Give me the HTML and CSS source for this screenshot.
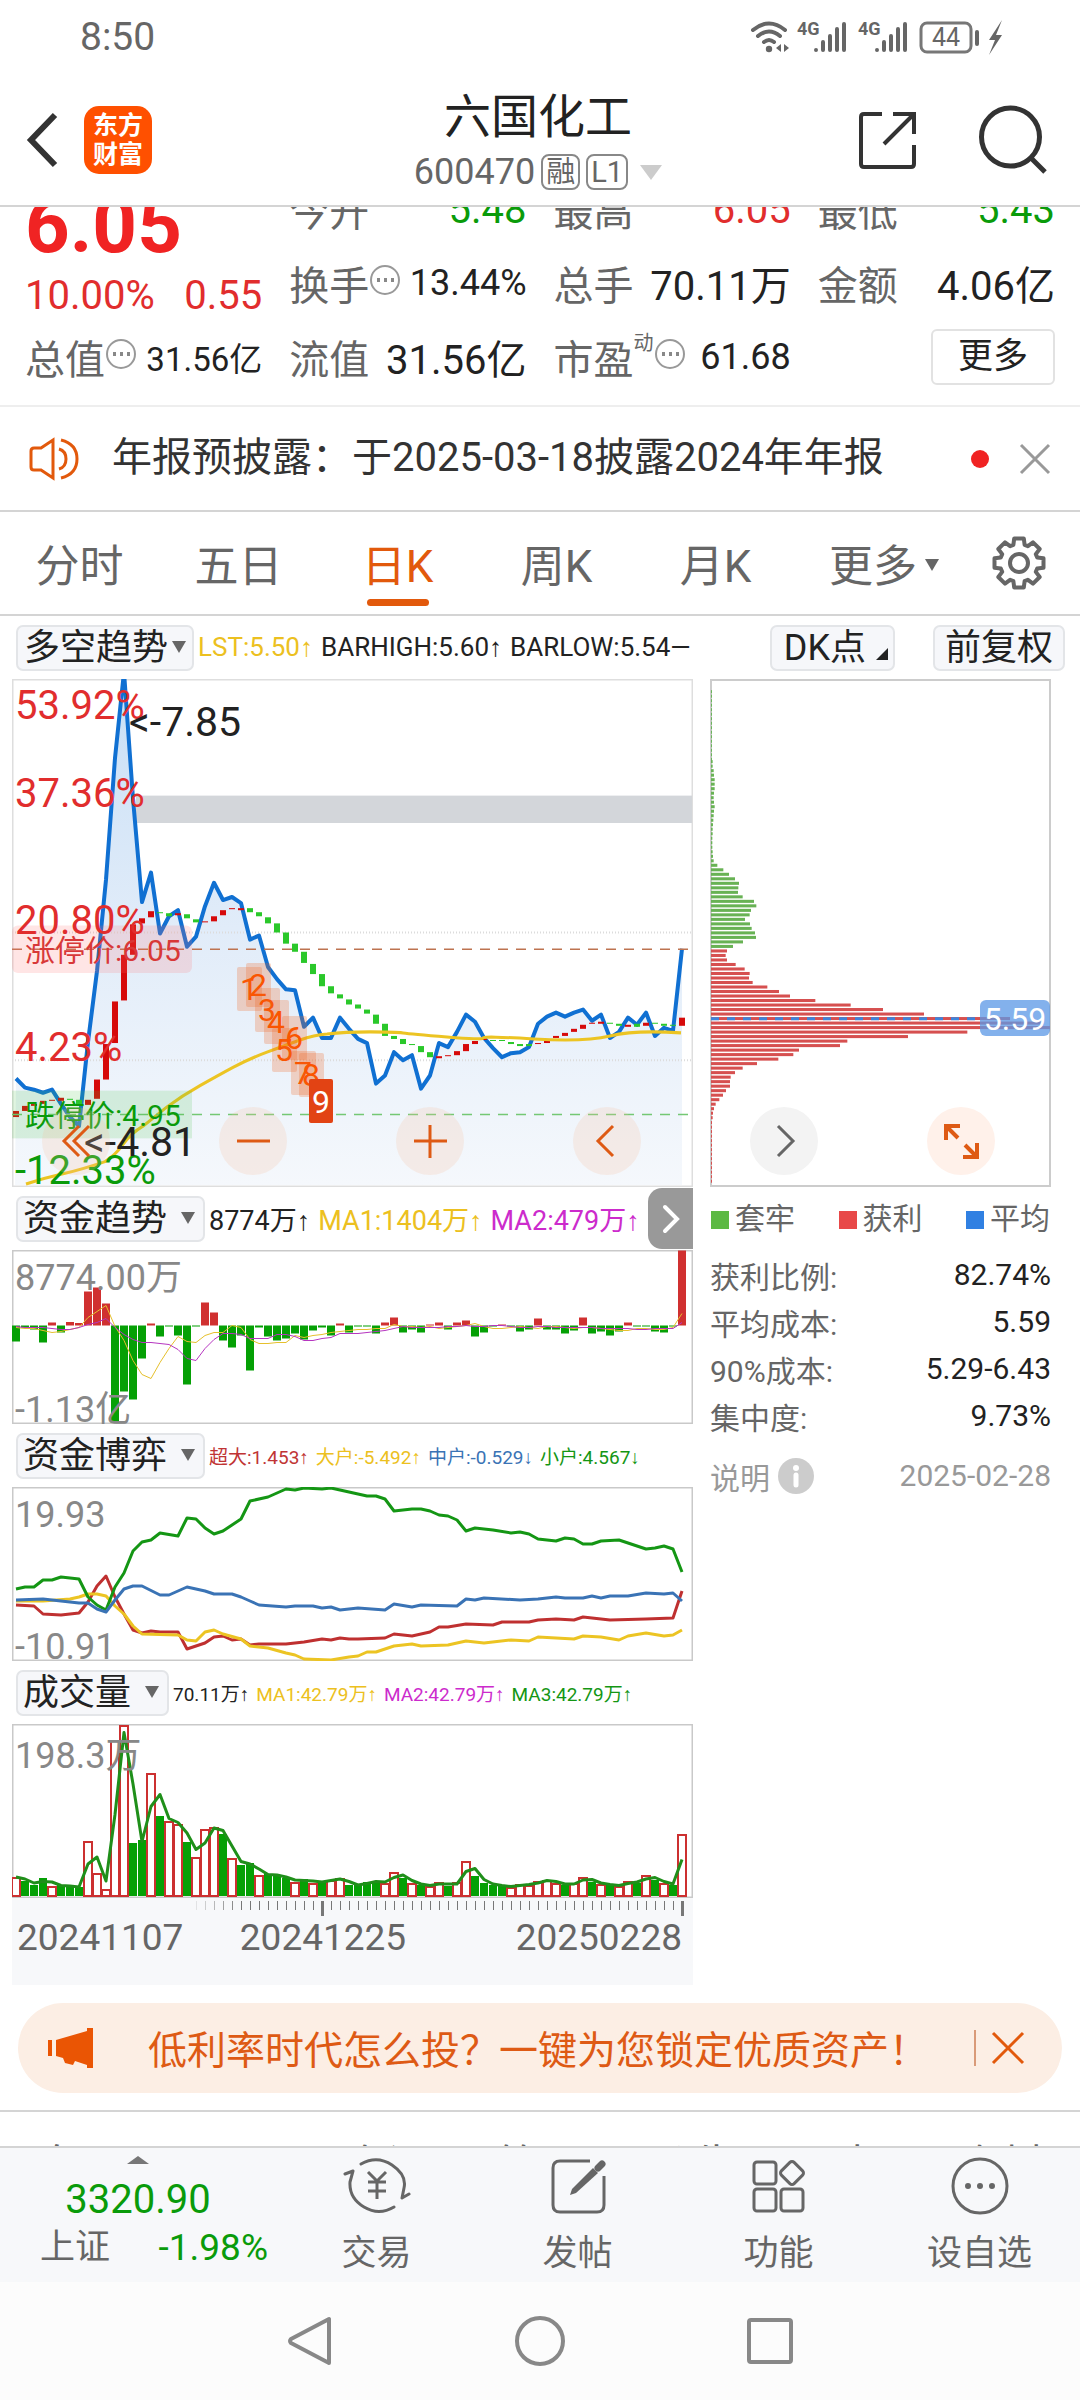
FILE: index.html
```html
<!DOCTYPE html>
<html lang="zh-CN">
<head>
<meta charset="utf-8">
<meta name="viewport" content="width=device-width, initial-scale=1">
<title>六国化工 600470</title>
<link rel="stylesheet" href="styles.css">
</head>
<body>
<div class="page">
  <div class="status">
    <span class="clock">8:50</span>
    <svg class="status-icons" viewBox="750 16 256 40" role="img" aria-label="Wi-Fi 4G 4G 44%">
      <g fill="none" stroke="#666" stroke-linecap="round" stroke-width="4">
        <path d="M753 29Q769 16 785 29M758 35Q769 26 780 35M764 41Q769 37 774 41"/>
        <path d="M816 49v0M823 41v8M830 35v14M837 28v21M844 23v26M877 49v0M884 41v8M891 35v14M898 28v21M905 23v26"/>
        <path d="M977 31v12"/>
      </g>
      <circle cx="769" cy="48" r="3.2" fill="#666"/>
      <path fill="#666" d="M781 43v8l-5-4zM784 43v8l5-4zM1002 19l-13 20h6l-6 15 13-20h-6z"/>
      <rect x="921" y="22" width="50" height="29" rx="6" fill="none" stroke="#777" stroke-width="3"/>
      <text class="net" x="797" y="34">4G</text><text class="net" x="858" y="34">4G</text>
      <text class="batt" x="946" y="45" text-anchor="middle">44</text>
    </svg>
  </div>

  <header class="header">
    <div class="header-left">
      <button class="icon-btn" aria-label="返回"><svg width="36" height="60" viewBox="0 0 36 60"><path d="M31 5L7 30l24 25" fill="none" stroke="#333" stroke-width="6"/></svg></button>
      <a class="logo" href="#"><span>东方</span><span>财富</span></a>
    </div>
    <div class="header-title">
      <h1>六国化工</h1>
      <div class="code">600470<span class="badge">融</span><span class="badge">L1</span><i class="tri-light"></i></div>
    </div>
    <div class="header-right">
      <button class="icon-btn" aria-label="分享"><svg width="60" height="62" viewBox="856 108 60 62"><g fill="none" stroke="#333" stroke-width="4"><path d="M881 113h-18q-3 0-3 3v47q0 3 3 3h47q3 0 3-3v-19"/><path d="M892 113h21v20M913 113l-30 30"/></g></svg></button>
      <button class="icon-btn" aria-label="搜索"><svg width="70" height="70" viewBox="977 104 70 70"><g fill="none" stroke="#333" stroke-width="5"><circle cx="1009.5" cy="136" r="29"/><path d="M1030 157l14 14"/></g></svg></button>
    </div>
  </header>

  <section class="quote">
    <div class="quote-grid">
      <div class="quote-main">
        <div class="price">6.05</div>
        <div class="change"><span>10.00%</span><span>0.55</span></div>
        <div class="cell"><span>总值</span><i class="dots"></i><b class="sm">31.56亿</b></div>
      </div>
      <div>
        <div class="cell"><span>今开</span><b class="down">5.48</b></div>
        <div class="cell"><span>换手</span><i class="dots"></i><b class="md">13.44%</b></div>
        <div class="cell"><span>流值</span><b>31.56亿</b></div>
      </div>
      <div>
        <div class="cell"><span>最高</span><b class="up">6.05</b></div>
        <div class="cell"><span>总手</span><b>70.11万</b></div>
        <div class="cell"><span>市盈<sup>动</sup></span><i class="dots"></i><b class="md">61.68</b></div>
      </div>
      <div>
        <div class="cell"><span>最低</span><b class="down">5.43</b></div>
        <div class="cell"><span>金额</span><b>4.06亿</b></div>
        <div class="cell"><button class="more">更多</button></div>
      </div>
    </div>
  </section>

  <div class="notice">
    <svg class="notice-icon" width="52" height="46" viewBox="0 0 52 46"><g fill="none" stroke="#e2590c" stroke-width="3"><path d="M24 4v38L12 34H5q-3 0-3-3V15q0-3 3-3h7z"/><path d="M30 13q7 2 7 10t-7 10M32 4q16 4 16 19T32 42"/></g></svg>
    <a href="#">年报预披露：于2025-03-18披露2024年年报</a>
    <i class="dot"></i>
    <button class="icon-btn" aria-label="关闭"><svg width="32" height="32" viewBox="0 0 32 32"><path d="M2 2l28 28M30 2L2 30" stroke="#999" stroke-width="3"/></svg></button>
  </div>

  <nav class="tabs">
    <button>分时</button><button>五日</button><button class="active">日K</button><button>周K</button><button>月K</button>
    <button>更多<i class="tri"></i></button>
    <button class="gear" aria-label="设置"><svg width="56" height="56" viewBox="-28 -28 56 56"><g fill="none" stroke="#666" stroke-width="4"><path id="gear" stroke-linejoin="round"/><circle r="9"/></g></svg></button>
  </nav>

  <div class="toolbar">
    <button class="pick">多空趋势<i class="tri"></i></button>
    <div class="legend legend-main"><span class="c-yellow">LST:5.50↑</span><span>BARHIGH:5.60↑</span><span>BARLOW:5.54—</span></div>
    <button class="pick dk">DK点<i class="corner"></i></button>
    <button class="pick">前复权</button>
  </div>

  <main class="charts">
    <svg id="trend" class="chart main-chart" viewBox="12 679 681 508"></svg>
    <svg id="chips" class="chart side-chart" viewBox="710 679 341 508"></svg>
    <div class="controls">
      <button aria-label="最早"><svg viewBox="-34 -34 68 68"><path d="M3-15L-12 0 3 15M13-15L-2 0l15 15"/></svg></button>
      <button aria-label="缩小"><svg viewBox="-34 -34 68 68"><path d="M-16 0h33"/></svg></button>
      <button aria-label="放大"><svg viewBox="-34 -34 68 68"><path d="M-16 0h33M0-16v33"/></svg></button>
      <button aria-label="左移"><svg viewBox="-34 -34 68 68"><path d="M6-15L-9 0 6 15"/></svg></button>
      <button class="grey" aria-label="右移"><svg viewBox="-34 -34 68 68"><path d="M-6-15L9 0-6 15"/></svg></button>
      <button class="solid" aria-label="全屏"><svg viewBox="-34 -34 68 68"><path d="M-15-1v-14h14M-14-14l11 11M16 2v14H2M15 15L4 4"/></svg></button>
    </div>

    <div class="sub">
      <div class="subbar">
        <button class="pick">资金趋势<i class="tri"></i></button>
        <div class="legend legend-l"><span>8774万↑</span><span class="c-yellow">MA1:1404万↑</span><span class="c-purple">MA2:479万↑</span></div>
        <button class="next" aria-label="更多指标"><svg width="20" height="32" viewBox="0 0 20 32"><path d="M4 4l12 12L4 28" fill="none" stroke="#fff" stroke-width="4" stroke-linecap="round"/></svg></button>
      </div>
      <svg id="fund" class="chart" viewBox="12 1250 681 174"></svg>
      <div class="subbar">
        <button class="pick">资金博弈<i class="tri"></i></button>
        <div class="legend legend-s"><span class="c-red">超大:1.453↑</span><span class="c-yellow">大户:-5.492↑</span><span class="c-blue">中户:-0.529↓</span><span class="c-green">小户:4.567↓</span></div>
      </div>
      <svg id="game" class="chart" viewBox="12 1487 681 174"></svg>
      <div class="subbar">
        <button class="pick">成交量<i class="tri"></i></button>
        <div class="legend legend-s"><span>70.11万↑</span><span class="c-yellow">MA1:42.79万↑</span><span class="c-purple">MA2:42.79万↑</span><span class="c-green">MA3:42.79万↑</span></div>
      </div>
      <svg id="volume" class="chart" viewBox="12 1724 681 174"></svg>
      <svg id="axis" class="chart axis" viewBox="12 1898 681 87"></svg>
    </div>

    <aside class="side">
      <ul class="keys"><li class="k-green">套牢</li><li class="k-red">获利</li><li class="k-blue">平均</li></ul>
      <dl>
        <div><dt>获利比例:</dt><dd>82.74%</dd></div>
        <div><dt>平均成本:</dt><dd>5.59</dd></div>
        <div><dt>90%成本:</dt><dd>5.29-6.43</dd></div>
        <div><dt>集中度:</dt><dd>9.73%</dd></div>
        <div class="note"><dt>说明<svg width="36" height="36" viewBox="0 0 36 36"><circle cx="18" cy="18" r="18" fill="#ccc"/><circle cx="18" cy="10" r="3" fill="#fff"/><path d="M18 17v10" stroke="#fff" stroke-width="5" stroke-linecap="round"/></svg></dt><dd>2025-02-28</dd></div>
      </dl>
    </aside>
  </main>

  <div class="banner">
    <svg width="46" height="40" viewBox="0 0 46 40"><path fill="#ea5504" d="M0 12h4v16H0zM8 12L39 3V0h6v40h-6v-3l-12-4-2 4-8-2-2-5-7-2z"/></svg>
    <a href="#">低利率时代怎么投？一键为您锁定优质资产！</a>
    <i class="rule"></i>
    <button class="icon-btn" aria-label="关闭"><svg width="36" height="36" viewBox="0 0 36 36"><path d="M3 3l30 30M33 3L3 33" stroke="#e2590c" stroke-width="3"/></svg></button>
  </div>

  <div class="info-tabs"><a href="#">盘口</a><a href="#">股吧</a><a href="#">资讯</a><a href="#">简况</a><a href="#">公告</a><a href="#">研报</a><a href="#">资料</a></div>

  <nav class="bottom">
    <a class="index" href="#">
      <i class="tri-up"></i>
      <strong>3320.90</strong>
      <span class="index-row"><span>上证</span><em>-1.98%</em></span>
    </a>
    <a href="#"><svg width="68" height="60" viewBox="0 0 68 60"><g fill="none" stroke="#666" stroke-width="3" stroke-linecap="round" stroke-linejoin="round"><path d="M18 8Q34-1 49 9T61 32L59 42 66 38M51 51Q36 60 21 51T7 26L10 15 2 18"/><path d="M25 16l9 9 9-9M25 26h18M25 35h18M34 26v17" stroke-linecap="butt"/></g></svg>交易</a>
    <a href="#"><svg width="60" height="60" viewBox="0 0 60 60"><path d="M42 5H12q-7 0-7 7v37q0 7 7 7h37q7 0 7-7V20" fill="none" stroke="#666" stroke-width="3"/><path d="M54 8l-4 4" stroke="#666" stroke-width="7" stroke-linecap="round"/><path fill="#666" d="M45 12l5 5-22 20-6 2 2-6z"/></svg>发帖</a>
    <a href="#"><svg width="60" height="60" viewBox="0 0 60 60"><g fill="none" stroke="#666" stroke-width="3"><rect x="5" y="6" width="22" height="22" rx="3"/><rect x="5" y="33" width="22" height="22" rx="3"/><rect x="32" y="33" width="22" height="22" rx="3"/><rect x="34" y="8" width="18" height="18" rx="3" transform="rotate(45 43 17)"/></g></svg>功能</a>
    <a href="#"><svg width="60" height="60" viewBox="0 0 60 60"><circle cx="30" cy="30" r="27" fill="none" stroke="#666" stroke-width="3"/><path d="M18 30h0M30 30h0M42 30h0" stroke="#666" stroke-width="6" stroke-linecap="round"/></svg>设自选</a>
  </nav>

  <div class="system">
    <button class="icon-btn" aria-label="返回"><svg width="52" height="56" viewBox="0 0 52 56"><path d="M45 6v44L7 30q-2-2 0-4z" fill="none" stroke="#888" stroke-width="4" stroke-linejoin="round"/></svg></button>
    <button class="icon-btn" aria-label="主页"><svg width="52" height="56" viewBox="0 0 52 56"><circle cx="26" cy="28" r="23" fill="none" stroke="#888" stroke-width="4"/></svg></button>
    <button class="icon-btn" aria-label="任务"><svg width="52" height="56" viewBox="0 0 52 56"><rect x="5" y="7" width="42" height="42" rx="2" fill="none" stroke="#888" stroke-width="4"/></svg></button>
  </div>
</div>
<script src="charts.js"></script>
</body>
</html>
```
FILE: styles.css
```css
* { box-sizing: border-box; }
body {
  margin: 0;
  background: #fff;
  color: #222;
  font-family: Roboto, "Liberation Sans", "Noto Sans CJK SC", sans-serif;
}
button { border: 0; background: none; padding: 0; margin: 0; font: inherit; color: inherit; }
a { color: inherit; text-decoration: none; }
i, em { font-style: normal; }
svg { display: block; }
.page { display: flex; flex-direction: column; min-height: 100vh; }
.icon-btn { display: flex; flex: none; }

.status { display: flex; justify-content: space-between; align-items: center; height: 74px; padding: 0 74px 0 80px; }
.clock { font-size: 39px; color: #666; }
.status-icons { width: 256px; height: 40px; }
.net { font-size: 18px; font-weight: 700; fill: #666; }
.batt { font-size: 25px; fill: #666; }

.header { display: grid; grid-template-columns: 1fr auto 1fr; align-items: center; height: 133px; padding: 0 32px 0 24px; border-bottom: 2px solid #d4d4d4; }
.header-left { display: flex; align-items: center; gap: 24px; }
.logo { display: grid; align-content: center; width: 68px; height: 68px; border-radius: 15px; background: #ff5000; color: #fff; font-size: 25px; font-weight: 700; line-height: 29px; text-align: center; }
.header-title { display: flex; flex-direction: column; align-items: center; padding: 5px 0 0 4px; }
h1 { margin: 0; font-size: 47px; font-weight: 400; line-height: 60px; }
.code { display: flex; align-items: center; gap: 6px; font-size: 36px; line-height: 50px; color: #666; }
.badge { border: 2px solid #888; border-radius: 8px; padding: 0 3px; font-size: 29px; line-height: 32px; }
.tri-light { margin-left: 6px; border: 11px solid transparent; border-top: 15px solid #ccc; border-bottom: 0; }
.header-right { display: flex; justify-content: flex-end; align-items: center; gap: 61px; }

.quote { overflow: hidden; border-bottom: 2px solid #eee; }
.quote-grid { display: grid; grid-template-columns: repeat(4, 1fr); gap: 27px; margin-top: -35px; padding: 0 25px 11px; }
.price { height: 100px; padding-top: 8px; line-height: 92px; font-size: 78px; font-weight: 700; color: #f02323; }
.change { display: flex; justify-content: space-between; height: 48px; line-height: 48px; font-size: 40px; color: #e12d2d; }
.cell { display: flex; align-items: center; height: 74px; font-size: 40px; color: #666; white-space: nowrap; }
.cell b { margin-left: auto; font-weight: 400; color: #222; }
.cell .sm { font-size: 33px; }
.cell .md { font-size: 36px; }
.cell .up { color: #e12d2d; }
.cell .down { color: #0a9b0a; }
.cell sup { font-size: 20px; line-height: 20px; vertical-align: 24px; }
.dots { width: 30px; height: 30px; margin: 0 1px 6px; border: 2px solid #999; border-radius: 50%; background: radial-gradient(circle, #888 2px, transparent 2px) 0 0 / 7px 100% content-box; padding: 0 3px; background-repeat: repeat-x; flex: none; }
.more { margin-left: auto; width: 124px; height: 56px; border: 2px solid #e2e2e2; border-radius: 6px; font-size: 35px; line-height: 50px; color: #222; }

.notice { display: flex; align-items: center; height: 105px; padding: 0 29px; border-bottom: 2px solid #d4d4d4; }
.notice a { flex: 1; margin-left: 31px; font-size: 40px; line-height: 48px; margin-bottom: 2px; white-space: nowrap; color: #333; }
.dot { width: 18px; height: 18px; margin-right: 30px; border-radius: 50%; background: #f02323; }

.tabs { display: grid; grid-template-columns: repeat(5, 159fr) 178fr 107fr; height: 104px; border-bottom: 2px solid #d4d4d4; }
.tabs button { position: relative; font-size: 44px; color: #666; }
.tabs .active { color: #e2590c; }
.tabs .active::after { content: ""; position: absolute; left: calc(50% - 31px); bottom: 8px; width: 62px; height: 7px; border-radius: 4px; background: #e2590c; }
.tabs .gear { display: flex; align-items: center; padding-left: 18px; }
.tri { display: inline-block; margin-left: 8px; border: 7px solid transparent; border-top: 12px solid #666; border-bottom: 0; vertical-align: 11px; }

.toolbar { display: flex; align-items: center; height: 63px; padding: 0 15px 0 16px; }
.pick { flex: none; height: 46px; padding: 0 5px; border: 2px solid #e3e5e8; border-radius: 7px; background: #f6f7fa; color: #222; font-size: 36px; line-height: 40px; white-space: nowrap; }
.pick .tri { vertical-align: 7px; margin-left: 14px; margin-right: 3px; }
.toolbar .pick { padding: 0 10px; }
.toolbar .pick .tri { margin-left: 4px; margin-right: 0; }
.toolbar .pick:first-child { padding: 0 6px; }
.toolbar .dk { margin-left: auto; margin-right: 38px; padding: 0 5px 0 12px; }
.corner { display: inline-block; margin-left: 10px; border-left: 12px solid transparent; border-bottom: 12px solid #222; }
.legend { display: flex; margin-left: 4px; white-space: nowrap; }
.legend-main { gap: 8px; font-size: 26px; }
.legend-l { gap: 8px; font-size: 27px; }
.legend-s { gap: 7px; font-size: 19px; }
.c-yellow { color: #ecc020; }
.c-purple { color: #cc2bcc; }
.c-red { color: #c03434; }
.c-blue { color: #3a73b5; }
.c-green { color: #149614; }

.charts { display: grid; grid-template-columns: 681fr 341fr; column-gap: 17px; padding: 0 29px 0 12px; }
.chart { width: 100%; height: auto; }
.main-chart { grid-area: 1 / 1; }
.side-chart { grid-area: 1 / 2; }
.controls { grid-area: 1 / 1 / 2 / 3; align-self: end; display: flex; justify-content: space-between; padding: 0 56px 12px 30px; z-index: 1; }
.controls button { width: 68px; height: 68px; border-radius: 50%; background: rgba(244, 190, 160, 0.22); }
.controls .grey { background: #f3f3f3; }
.controls .solid { background: #fff1ea; }
.controls path { fill: none; stroke: #de5a14; stroke-width: 3; }
.controls .grey path { stroke: #666; }
.controls .solid path { stroke-width: 4; }

.subbar { display: flex; align-items: center; height: 63px; padding: 0 0 0 4px; }
.next { display: grid; place-items: center; flex: none; align-self: stretch; width: 45px; margin: 1px 0 1px auto; border-radius: 14px 0 0 14px; background: #999; }
.axis { background: #f7f8fa; }

.side { color: #666; font-size: 30px; }
.keys { display: flex; justify-content: space-between; align-items: center; height: 58px; margin: 0; padding: 0 1px; list-style: none; }
.keys li::before { content: ""; display: inline-block; width: 18px; height: 18px; margin-right: 6px; }
.k-green::before { background: #5cb944; }
.k-red::before { background: #e84848; }
.k-blue::before { background: #3180e2; }
.side dl { margin: 6px 0 0; }
.side dl div { display: flex; justify-content: space-between; align-items: center; height: 47px; }
.side dt { display: flex; align-items: center; gap: 8px; }
.side dd { margin: 0; color: #222; }
.side .note { margin-top: 13px; color: #999; }
.side .note dd { color: #999; }

.banner { display: flex; align-items: center; height: 90px; margin: 18px 18px 17px; padding: 0 36px 0 30px; border-radius: 45px; background: #fceee4; color: #de5a14; }
.banner a { flex: 1; margin: 0 0 3px 54px; font-size: 39px; white-space: nowrap; }
.rule { width: 2px; height: 36px; margin-right: 14px; background: #d99a78; }
.info-tabs { display: flex; justify-content: space-between; height: 36px; padding: 25px 35px 0; overflow: hidden; border-top: 2px solid #d4d4d4; font-size: 44px; line-height: 60px; color: #666; }

.bottom { display: grid; grid-template-columns: 276fr repeat(4, 201fr); height: 136px; border-top: 2px solid #d4d4d4; background: #f7f8fa; color: #666; font-size: 35px; }
.bottom > a { display: flex; flex-direction: column; align-items: center; padding-top: 8px; line-height: 76px; }
.bottom > a > svg { flex: none; }
.bottom .index { line-height: 48px; }
.tri-up { border: 11px solid transparent; border-bottom: 8px solid #777; border-top: 0; }
.index strong { margin-top: 12px; font-size: 40px; font-weight: 400; color: #0a9b0a; }
.index-row { display: flex; justify-content: space-between; padding: 0 8px 0 40px; align-self: stretch; }
.index em { font-size: 37px; color: #0a9b0a; }

.system { display: flex; flex: 1; justify-content: center; align-items: center; gap: 178px; min-height: 117px; background: #fcfcfc; }

/* chart text */
.pct { font-size: 40px; }
.mark { font-size: 41px; fill: #222; }
.limit { font-size: 30px; }
.scale { font-size: 36px; fill: #888; }
.date { font-size: 37px; fill: #666; }
.step { font-size: 32px; fill: #fa5500; text-anchor: middle; }
.tag { font-size: 32px; fill: #fff; text-anchor: middle; }
```
FILE: charts.js
```js
// Every series has 75 daily points, 9 units apart.
const PITCH = 9, X0 = 16;
const x = i => X0 + i * PITCH;
const put = (id, html) => { document.getElementById(id).innerHTML = html; };
const line = (pts, color, width) =>
  `<polyline points="${pts.map(p => p.join()).join(' ')}" fill="none" stroke="${color}" stroke-width="${width}" stroke-linejoin="round"/>`;
const text = (cls, tx, ty, s, extra = '') => `<text class="${cls}" x="${tx}" y="${ty}" ${extra}>${s}</text>`;
const box = (bx, by, w, h, fill, extra = '') => `<rect x="${bx}" y="${by}" width="${w}" height="${h}" fill="${fill}" ${extra}/>`;
const frame = (y, h, color) => `<rect x="12.5" y="${y + .5}" width="680" height="${h - 1}" fill="none" stroke="${color}" stroke-width="2"/>`;
const UP = '#cc3030', DOWN = '#05a005';

// The two tall plots map 500 price units onto 507 drawing units.
const TOP = 679, ZOOM = 507 / 500;
const Y = v => Math.round(TOP + (v - TOP) * ZOOM);
const plot = shapes => `<g transform="translate(0 ${TOP}) scale(1 ${ZOOM}) translate(0 ${-TOP})">${shapes}</g>`;

// ---- price trend ----
const price = [1073,1082,1084,1087,1084,1098,1111,1120,1037,967,877,757,672,797,899,870,930,913,907,943,933,903,880,897,894,900,936,932,963,975,985,986,1022,1013,1033,1033,1013,1024,1034,1038,1078,1070,1047,1055,1050,1083,1070,1038,1042,1027,1010,1017,1033,1043,1052,1048,1047,1042,1019,1012,1008,1012,1008,1005,1016,1010,1033,1027,1013,1020,1008,1031,1023,1026,945];
const steps = [[1105,1111],[1100,1105],[1098,1100],[1095,1098],[1094,1095],[1092,1095],[1093,1094,1],[1094,1099,1],[1094,1099],[1074,1093],[1039,1074],[997,1038],[951,996],[921,951],[915,920],[908,914],[909,910,1],[910,913,1],[910,912],[911,915,1],[916,919,1],[918,919],[913,918],[907,912],[905,906],[905,907],[905,909,1],[909,913,1],[914,920,1],[920,929,1],[929,940,1],[940,948,1],[948,959,1],[960,970,1],[970,982,1],[982,989,1],[990,994,1],[995,1000,1],[1000,1004,1],[1005,1009,1],[1010,1019,1],[1019,1031,1],[1031,1034,1],[1034,1039,1],[1039,1040,1],[1041,1047,1],[1047,1052,1],[1051,1053],[1050,1051],[1046,1050],[1039,1046],[1036,1039],[1034,1035],[1035,1036,1],[1035,1036,1],[1037,1039,1],[1039,1041,1],[1039,1041,1],[1038,1039],[1036,1038],[1031,1033],[1028,1031],[1024,1027],[1020,1024],[1018,1019],[1017,1019],[1018,1019,1],[1019,1021,1],[1020,1022],[1019,1022,1],[1018,1021],[1018,1019,1],[1019,1021,1],[1020,1021,1],[1013,1021]];
const avg = 'M26 1177Q45 1171 63 1167T105 1155Q115 1149 123 1138T143 1120L167 1101Q182 1090 200 1080T233 1062T267 1047T300 1035T327 1029Q345 1027 370 1027T403 1028T447 1032T483 1033T534 1034T610 1031T681 1028';
const pricePts = price.map((y, i) => [x(i), y]);
let s = '<defs><linearGradient id="fill" x1="0" y1="0" x2="0" y2="1"><stop offset="0" stop-color="#c8dff6"/><stop offset=".5" stop-color="#e1ecf9"/><stop offset="1" stop-color="#f5f8fc"/></linearGradient></defs>';
s += frame(679, 508, '#dedede');
let g = box(136, 794, 556, 27, '#d3d6da');
g += `<polygon points="15,1178 ${pricePts.map(p => p.join()).join(' ')} 682,1178" fill="url(#fill)"/>`;
for (const y of [929, 1055]) g += `<path d="M12 ${y}H693" stroke="#dcdcdc" stroke-width="2" stroke-dasharray="1 2"/>`;
g += line(pricePts, '#1070d2', 4);
steps.forEach(([a, b, down], i) => { g += box(x(i) - 3, a, 6, Math.max(1, b - a), down ? '#2ac82a' : '#d60a0a'); });
g += `<path d="${avg}" fill="none" stroke="#ecc423" stroke-width="3"/>`;
g += '<path d="M12 945.500H690" stroke="#bd7350" stroke-width="1.500" stroke-dasharray="10 8"/><path d="M12 1108.500H690" stroke="#74c874" stroke-width="1.500" stroke-dasharray="10 8"/>';
g += box(12, 922, 180, 47, 'rgba(255,110,110,.18)', 'rx="6"') + box(12, 1085, 180, 47, 'rgba(60,190,60,.16)');
s += plot(g);
s += text('limit', 25, Y(957), '涨停价:6.05', 'fill="#d83838"') + text('limit', 25, Y(1120), '跌停价:4.95', 'fill="#0a9b0a"');
[['53.92%', 718], ['37.36%', 805], ['20.80%', 930], ['4.23%', 1056]].forEach(([t, y]) => { s += text('pct', 15, Y(y), t, 'fill="#e12d2d"'); });
s += text('pct', 15, Y(1177), '-12.33%', 'fill="#0a9b0a"');
s += text('mark', 129, Y(735), '&lt;-7.85') + text('mark', 84, Y(1149), '&lt;-4.81');
[[237,963],[246,959],[255,984],[264,996],[272,1023],[282,1011],[291,1046],[299,1048]].forEach(([bx, by], i) => {
  s += box(bx, Y(by), 25, 44, 'rgba(240,100,30,.25)', 'rx="2"') + text('step', bx + 12, Y(by) + 33, i + 1);
});
s += box(309, Y(1073), 24, 44, '#e24314', 'rx="2"') + text('tag', 321, Y(1107), 9);
put('trend', s);

// ---- chip distribution ----
const green = [5,5,8,9,11,11,11,9,8,9,11,9,8,7,6,5,5,4,4,4,5,6,8,19,37,54,72,84,82,81,95,129,136,120,116,102,117,122,132,135,96,66];
const red = [48,44,48,74,101,116,114,125,169,204,237,313,419,516,639,897,992,1017,769,591,409,387,264,247,202,138,95,72,59,57,57,45,36,25,14,9,6,5];
const ROW = 40 / 9;
s = '<rect x="711" y="680" width="339" height="506" fill="none" stroke="#ccc" stroke-width="2"/>';
g = '';
for (let y = 690; y < 760; y += ROW) g += box(711, y, 1, 3, '#6ab45a');
green.forEach((w, i) => { g += box(711, 759 + i * ROW, w / 3, 3, '#68b254'); });
red.forEach((w, i) => { g += box(711, 945.700 + i * ROW, w / 3, 3, '#d65050'); });
for (let y = 1115; y < 1175; y += ROW) g += box(711, y, 1, 3, '#d65050');
g += '<path d="M711 1014H980" stroke="#3c84dc" stroke-width="3" stroke-dasharray="8 8"/>';
s += plot(g);
s += box(980, Y(996), 70, 36, 'rgba(92,152,230,.76)', 'rx="6"') + text('tag', 1015, Y(1025), '5.59');
put('chips', s);

// ---- fund trend ----
const flow = [-16,-2,-4,-17,3,-7,3.5,2.5,34,38,22,-97,-66,-74,-33,2,-11,-1,-10,-59,-1,23,13,-15,-22,-10,-45,-2,-11,-15,-13,-8,-14,-5,-2,-10,2,-7,-1,-1,-8,3,8,-7,-4,-7,1,3,-4,3,5,-11,-7,-1,1,-1,-6,-4,7,-4,-4,-8,-5,8,-8,-6,-10,-6,3,-1,-1,-6,-7,-1,75];
const ma1 = [-2,-3,-3,-5,-7,-6,-4,-2,8,14,20,-1,-15,-35,-49,-53,-37,-23,-11,-16,-17,-10,-7,-7,0,-2,-14,-18,-18,-17,-17,-10,-12,-10,-9,-7,-6,-5,-4,-4,-3,-3,1,-1,-1,-2,-1,-3,-2,-1,0,2,-1,-3,-3,-2,-1,-2,-3,-1,-1,-2,-3,-2,-2,-3,-4,-5,-5,-3,-3,-4,-4,-2,12];
const ma2 = [-1,-2,-2,-2,-3,-4,-4,-2,1,3,7,-2,-9,-14,-17,-17,-18,-19,-24,-33,-35,-23,-14,-8,-8,-9,-13,-13,-13,-9,-9,-11,-15,-15,-13,-12,-8,-8,-8,-7,-6,-5,-3,-1,-2,-2,-2,-2,-1,-1,0,-1,-1,0,0,-1,-2,-2,-1,-1,-2,-2,-2,-2,-2,-3,-3,-3,-3,-4,-4,-3,-3,-3,3];
const BASE = 1325.5;
s = frame(1250, 174, '#c9c9c9');
flow.forEach((v, i) => { s += box(x(i) - 4, v > 0 ? BASE - v : BASE, 8, Math.abs(v), v > 0 ? '#d03030' : DOWN); });
s += line(ma1.map((v, i) => [x(i), BASE - v]), '#e6c02c', 1) + line(ma2.map((v, i) => [x(i), BASE - v]), '#b636c0', 1);
s += text('scale', 15, 1290, '8774.00万') + text('scale', 15, 1422, '-1.13亿');
put('fund', s);

// ---- fund game, sparse [index, y] pairs ----
const pairs = str => str.split(' ').map(p => p.split(':')).map(([i, y]) => [x(+i), +y]);
s = frame(1487, 174, '#c9c9c9') + text('scale', 15, 1527, '19.93') + text('scale', 15, 1659, '-10.91');
s += line(pairs('0:1605 2:1606 3:1614 5:1615 7:1613 8:1602 9:1586 10:1576 11:1597 12:1614 13:1630 14:1633 15:1631 16:1632 18:1632 19:1649 20:1646 21:1643 22:1637 23:1636 24:1640 25:1639 26:1645 27:1644 30:1644 32:1642 34:1639 35:1640 36:1638 37:1639 38:1639 41:1638 42:1634 44:1636 46:1632 47:1627 48:1627 50:1624 53:1625 54:1622 57:1622 58:1620 60:1619 62:1620 63:1617 66:1620 70:1619 73:1618 74:1591'), '#bf3030', 3);
s += line(pairs('0:1601 3:1601 6:1599 7:1597 8:1594 9:1594 10:1596 11:1606 12:1614 13:1626 14:1634 18:1635 19:1640 20:1641 21:1632 22:1630 23:1634 25:1639 26:1646 28:1648 30:1653 31:1655 32:1659 35:1660 37:1657 38:1656 39:1652 40:1652 41:1649 42:1646 44:1644 45:1646 48:1645 50:1641 52:1643 55:1640 57:1641 58:1637 62:1639 63:1636 65:1637 67:1640 68:1636 70:1633 72:1636 73:1635 74:1630'), '#ecc423', 3);
s += line(pairs('0:1589 1:1587 2:1587 3:1580 4:1580 5:1577 6:1578 7:1579 8:1597 9:1605 10:1610 11:1587 12:1573 13:1551 14:1542 15:1540 16:1533 18:1536 19:1518 20:1519 21:1528 22:1534 23:1531 25:1519 26:1501 28:1497 30:1489 31:1490 32:1488 34:1489 35:1488 36:1490 38:1494 39:1496 40:1496 41:1499 42:1511 44:1509 45:1509 46:1511 47:1515 48:1516 49:1520 50:1531 51:1528 53:1530 55:1533 56:1532 57:1534 58:1539 60:1541 61:1538 62:1539 63:1544 64:1544 65:1541 67:1540 70:1549 71:1548 72:1546 73:1549 74:1572'), '#149614', 3);
s += line(pairs('0:1600 3:1599 7:1603 8:1603 9:1609 10:1612 11:1600 12:1589 13:1586 14:1586 16:1595 17:1595 19:1587 21:1591 22:1594 24:1594 25:1597 26:1601 27:1605 30:1607 31:1606 33:1606 34:1608 35:1607 36:1610 38:1608 41:1610 42:1604 44:1607 45:1605 49:1606 50:1599 51:1600 52:1598 56:1600 58:1599 60:1597 61:1598 63:1598 64:1596 65:1598 66:1596 68:1596 70:1593 72:1594 73:1593 74:1601'), '#3a73b5', 3);
put('game', s);

// ---- volume: positive = rise (hollow), negative = fall (solid) ----
const vol = [19,-15,-11,-18,10,-11,-9,-9,55,23,7,156,171,-53,-56,123,-80,75,72,-54,39,67,69,-62,38,-31,-33,21,-22,-20,-18,14,-17,13,-15,16,18,-11,-11,-14,-15,13,24,-18,13,-11,10,14,-10,14,35,-20,-13,-11,-10,9,12,11,15,16,13,-11,13,19,-14,12,-11,10,15,-13,21,-16,13,-11,62];
s = frame(1724, 174, '#c9c9c9');
vol.forEach((v, i) => {
  s += v > 0
    ? `<rect x="${x(i) - 4}" y="${1897 - v}" width="8" height="${v - 1}" fill="#fff" stroke="${UP}" stroke-width="2"/>`
    : box(x(i) - 4, 1896 + v, 8, -v, DOWN);
});
s += line(vol.map((v, i) => [x(i), 1896 - (Math.abs(v) + Math.abs(vol[i - 1] || v)) / 2]), '#1f8f1a', 3);
s += text('scale', 15, 1768, '198.3万');
put('volume', s);

// ---- time axis ----
s = '';
for (let i = 20; i <= 74; i++) {
  const major = i === 34 || i === 74;
  s += box(x(i) - (major ? 1 : 0), 1901, major ? 3 : 1, major ? 15 : 9, '#777', `opacity="${Math.min(1, (i - 19) / 6)}"`);
}
s += text('date', 17, 1950, '20241107') + text('date', 323, 1950, '20241225', 'text-anchor="middle"') + text('date', 682, 1950, '20250228', 'text-anchor="end"');
put('axis', s);

// ---- settings gear outline: eight teeth ----
let d = '';
for (let k = 0; k < 8; k++) {
  const at = (deg, r) => { const a = (k * 45 + deg) * Math.PI / 180; return `${(r * Math.sin(a)).toFixed(1)} ${(-r * Math.cos(a)).toFixed(1)}`; };
  d += `${k ? 'L' : 'M'}${at(-11, 25)}L${at(11, 25)}L${at(17, 19)}L${at(28, 19)}`;
}
document.getElementById('gear').setAttribute('d', d + 'Z');
```
